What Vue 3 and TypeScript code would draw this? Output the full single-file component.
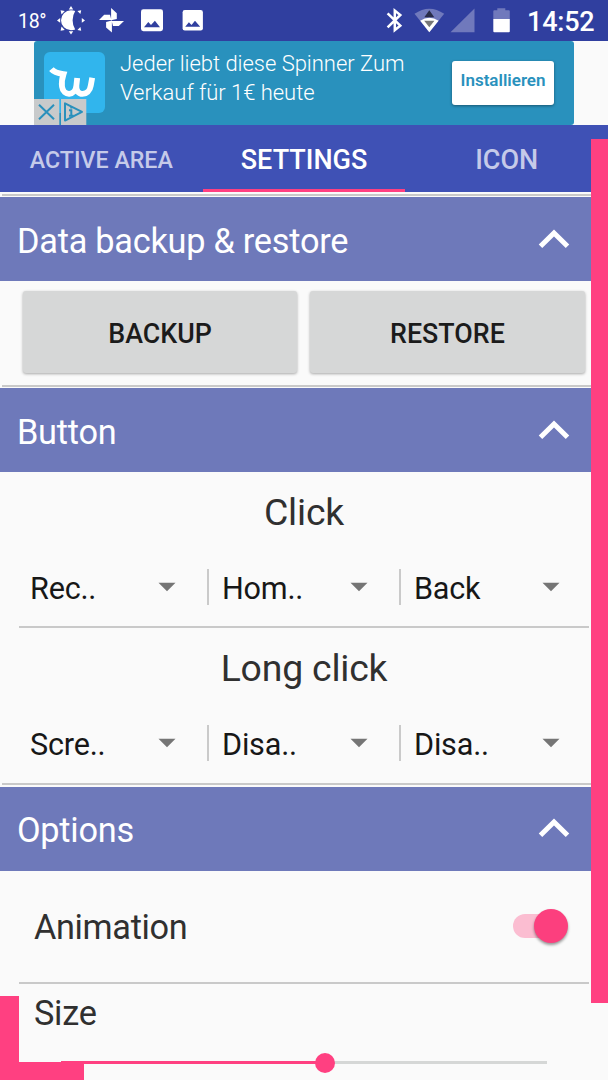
<script setup lang="ts">
import { ref } from 'vue'

interface ActionRow {
  title: string
  values: string[]
}

const tabs = [
  { label: 'ACTIVE AREA', kind: 'first' },
  { label: 'SETTINGS', kind: 'active' },
  { label: 'ICON', kind: 'last' },
]
const actions: ActionRow[] = [
  { title: 'Click', values: ['Rec..', 'Hom..', 'Back'] },
  { title: 'Long click', values: ['Scre..', 'Disa..', 'Disa..'] },
]
const size = ref(54.3)
</script>

<template>
  <div class="screen">
    <header class="status">
      <span class="temp">18°</span>
      <svg class="status-icons" width="150" height="40" viewBox="56 0 150 40">
        <g fill="#fff">
          <path d="M75.2 11Q73.4 10.3 71 10.3A10 10 0 0 0 71 30.3Q73.4 30.3 75.2 29.6Q72.6 25.5 72.6 20.3T75.2 11Z" />
          <path d="M68.8 9.4 71 6l2.2 3.4ZM68.8 31.2 71 34.6l2.2-3.4ZM60.2 18.1 57 20.4l3.2 2.3ZM81.8 18.1 85 20.4l-3.2 2.3ZM60.6 10.2l4.2.9-3.3 3.3ZM60.6 30.8l4.2-.9-3.3-3.3ZM81.2 10.2l-3.8.8 3 3ZM81.2 30.8l-3.8-.8 3-3Z" />
          <path d="M111.1 8.1 116.8 13.2V19L111.1 20.2ZM124 20.9 118.8 26.1H113L111.7 20.9ZM111.9 32.5 106.1 27.4V22L111.9 20.5ZM99 20.1 104.2 14.8H110L111.4 20.1Z" />
          <rect x="141" y="9.2" width="22" height="22" rx="2.4" />
          <rect x="182.6" y="10" width="20.3" height="20.4" rx="2.2" />
        </g>
        <path fill="#303f9f" d="m144 27.2 4.3-5.2 2.7 3 3.9-4.2L160 27.2ZM185.2 26.8l3.7-4.6 2.6 2.9 3.5-4.3 5.2 6Z" />
      </svg>
      <svg class="system-icons" width="126" height="40" viewBox="385 0 126 40">
        <path d="m387.6 13.4 12.7 12.3-5.5 4.4V10.6l5.5 4.4-12.7 12.3" fill="none" stroke="#fff" stroke-width="2.5" />
        <path d="M429.3 32.3 414.5 13.8Q429.3 3.5 444.2 13.8Z" fill="#7079bc" />
        <path d="M429.3 32.3 420.2 20.8Q429.3 14.8 438.6 20.8Z" fill="#fff" />
        <path d="m424.3 17.2 5-7 5 7Z" fill="#292c49" />
        <path d="m424.2 20.8 5.1 6.4 5.1-6.4Z" fill="#777" />
        <path d="M450.5 32.3 474.5 8.5v23.8Z" fill="#7079bc" />
        <path d="M493.3 19V11.2q0-1 1-1h3V8.3h8v1.9h3.5q1 0 1 1V19Z" fill="#7079bc" />
        <path d="M493.3 19h16.5v12.3q0 1-1 1h-14.5q-1 0-1-1Z" fill="#fff" />
      </svg>
      <time class="clock">14:52</time>
    </header>

    <section class="ad-strip">
      <div class="ad">
        <svg class="wish" width="61" height="61" viewBox="0 0 61 61">
          <rect width="61" height="61" rx="6" fill="#31b5ed" />
          <path d="M7.4 17.2C10.5 21 16 21.7 19.5 22.2Q17.2 29 18 34.5C19.5 44.8 31.2 44.2 32.4 33.5L33.2 26M32.4 33.5C31.2 45 45.2 44.5 46.8 33.5L48.2 25.8" fill="none" stroke="#fff" stroke-width="5.8" />
        </svg>
        <p class="ad-copy">Jeder liebt diese Spinner Zum<br>Verkauf für 1€ heute</p>
        <button class="install">Installieren</button>
        <svg class="ad-controls" width="53" height="26" viewBox="0 0 53 26">
          <path d="M0 0h25.3v26H0ZM27 0h25.3v26H27Z" fill="#c8cacb" />
          <g fill="none" stroke="#2990bc" stroke-width="2">
            <path d="m5 5.8 15 14.5M20 5.8 5 20.3" />
            <path d="M31 4.3v17.3l17-8.7Z" stroke-linejoin="round" />
            <path d="M35 11.2h2.3v5.5m-2.3 0h4.6M37.3 7.6v2" />
          </g>
        </svg>
      </div>
    </section>

    <nav class="tabs">
      <button v-for="tab in tabs" :key="tab.label" :class="['tab', tab.kind]"><span>{{ tab.label }}</span></button>
    </nav>

    <main>
      <div class="rule top-rule"></div>
      <h2 class="heading top-heading"><span>Data backup &amp; restore</span><svg width="32" height="20" viewBox="0 0 32 20"><path d="m2.5 17.2 13.5-13.3 13.5 13.3" /></svg></h2>
      <section class="backup">
        <button>BACKUP</button><button>RESTORE</button>
      </section>
      <div class="rule"></div>
      <h2 class="heading"><span>Button</span><svg width="32" height="20" viewBox="0 0 32 20"><path d="m2.5 17.2 13.5-13.3 13.5 13.3" /></svg></h2>
      <section class="actions">
        <div v-for="row in actions" :key="row.title" class="action-group">
          <h3>{{ row.title }}</h3>
          <div class="selectors">
            <div v-for="(value, i) in row.values" :key="i" class="selector">
              <span>{{ value }}</span>
              <svg width="18" height="10" viewBox="0 0 18 10"><path d="M.5.7h17L9 9.2Z" fill="#757575" /></svg>
            </div>
          </div>
        </div>
      </section>
      <div class="rule"></div>
      <h2 class="heading"><span>Options</span><svg width="32" height="20" viewBox="0 0 32 20"><path d="m2.5 17.2 13.5-13.3 13.5 13.3" /></svg></h2>
      <section class="animation">
        <span>Animation</span>
        <div class="switch"><i></i></div>
      </section>
      <section class="size">
        <span>Size</span>
        <div class="slider"><div class="fill" :style="{ width: size + '%' }"></div><i :style="{ left: size + '%' }"></i></div>
      </section>
    </main>
    <div class="edge right"></div>
    <div class="edge left"></div>
    <div class="edge bottom"></div>
  </div>
</template>

<style>
body { margin: 0; overflow: hidden; }
</style>

<style scoped>
* { box-sizing: border-box; }
.screen { position: relative; width: 608px; height: 1080px; overflow: hidden; background: #fafafa; color: #303030; font-family: Roboto, sans-serif; }
button { border: 0; padding: 0; font-family: inherit; }
h2, h3, p { margin: 0; font-weight: 400; }
.status { display: flex; height: 40.5px; padding-left: 18px; background: #303f9f; color: #fff; }
.temp { width: 38px; padding-top: 10px; font-size: 19.5px; line-height: 23px; letter-spacing: -.3px; white-space: nowrap; }
.status-icons { flex: none; }
.system-icons { flex: none; margin-left: 179px; }
.clock { margin-left: 16px; padding-top: 5px; font-size: 27px; line-height: 34px; font-weight: 500; letter-spacing: -.2px; white-space: nowrap; }
.ad-strip { height: 84.5px; padding: .5px 34px 0; }
.ad { position: relative; display: flex; height: 84px; padding: 11px 20px 0 10px; border-radius: 3px; background: #2991bd; color: #fff; }
.wish { flex: none; }
.ad-copy { flex: 1; margin: -2px 0 0 15px; font-size: 22px; line-height: 28.7px; font-weight: 300; letter-spacing: -.03px; white-space: nowrap; }
.install { width: 102px; height: 44px; margin-top: 9px; padding-bottom: 6px; border-radius: 3px; background: #fff; color: #2991bd; font-size: 17px; font-weight: 600; box-shadow: 0 1px 3px #0006; }
.ad-controls { position: absolute; left: 0; bottom: 0; }
.tabs { display: grid; grid-template-columns: 202.7px 202.7px 202.6px; height: 67px; background: #3f51b5; }
.tab { padding-top: 2px; background: transparent; color: #c5cae9; font-size: 27px; font-weight: 500; white-space: nowrap; }
.tab.first { padding-top: 3px; font-size: 23.2px; }
.tab.active { border-bottom: 3px solid #ff4081; padding-top: 5px; color: #fff; }
.rule { width: 590px; height: 2px; margin-left: 2px; background: #c9c9c9; }
.top-rule { margin-top: 2px; }
.heading { display: flex; align-items: center; justify-content: space-between; height: 84px; margin-top: 1.5px; padding: 3px 38px 0 17px; background: #6e79ba; color: #fff; font-size: 34.3px; letter-spacing: -.25px; }
.top-heading { margin-top: 1px; margin-bottom: .5px; }
.heading svg { margin-top: -4px; }
.heading path { fill: none; stroke: #fff; stroke-width: 5; }
.backup { display: flex; gap: 13px; height: 103px; padding: 9.5px 23px 0; }
.backup button { width: 274.3px; height: 82px; padding-top: 3px; border-radius: 3px; background: #d6d7d7; color: #1b1b1b; font-size: 26.8px; font-weight: 500; box-shadow: 0 1px 3px #0005; }
.actions { height: 311px; }
.action-group { height: 157px; }
.action-group:first-child { height: 156px; background: linear-gradient(#c9c9c9, #c9c9c9) 19px 100% / 570px 2px no-repeat; }
h3 { padding-top: 18px; text-align: center; font-size: 37.4px; line-height: 44px; letter-spacing: -.2px; }
.selectors { display: flex; padding: 35px 0 0 15px; }
.selector { display: flex; align-items: center; width: 192px; height: 36px; padding: 2px 31.5px 0 15px; justify-content: space-between; color: #171717; font-size: 30.6px; letter-spacing: -.2px; }
.selector + .selector { border-left: 2px solid #cacaca; padding-left: 13px; }
.selector svg { margin-top: -3px; }
.animation { display: flex; align-items: center; justify-content: space-between; height: 113px; padding: 0 40px 0 34px; font-size: 34.3px; letter-spacing: -.35px; background: linear-gradient(#c9c9c9, #c9c9c9) 19px 100% / 570px 2px no-repeat; }
.switch { position: relative; width: 55px; height: 34px; margin-top: -3px; }
.switch::before { content: ""; position: absolute; left: 0; top: 5px; width: 48px; height: 24px; border-radius: 12px; background: #fbbdd1; }
.switch i { position: absolute; right: 0; top: 0; width: 34px; height: 34px; border-radius: 50%; background: #fc3f7e; box-shadow: 0 2px 3px #0006; }
.size { padding: 8px 61px 0 34px; font-size: 34.3px; line-height: 42px; letter-spacing: -.25px; }
.slider { position: relative; width: 486px; height: 3px; margin: 27.5px 0 0 27px; background: #d5d7d6; }
.fill { height: 100%; background: #ff4081; }
.slider i { position: absolute; top: -8.5px; width: 20px; height: 20px; border-radius: 50%; background: #ff4081; transform: translateX(-50%); }
.edge { position: absolute; background: #ff4081; }
.right { top: 139px; right: 0; width: 17px; height: 864px; }
.left { left: 0; bottom: 0; width: 18.5px; height: 84.5px; }
.bottom { left: 0; bottom: 0; width: 84.3px; height: 18.5px; }
</style>
